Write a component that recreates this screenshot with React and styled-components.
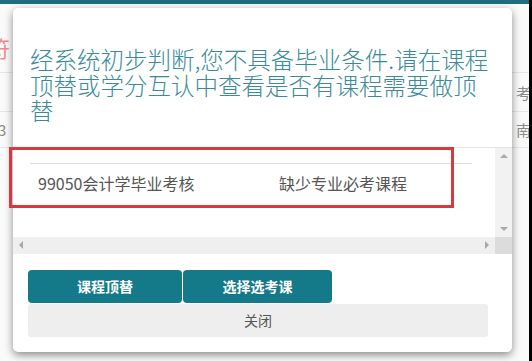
import styled, { createGlobalStyle } from "styled-components";

const GlobalStyle = createGlobalStyle`
  html, body {
    margin: 0;
    padding: 0;
    background: #fafafa;
  }
  body {
    font-family: "Noto Sans CJK SC", "Noto Sans", sans-serif;
  }
`;

const Page = styled.div`
  position: relative;
  width: 532px;
  height: 361px;
  overflow: hidden;
  background: #fafafa;
  border-right: 3px solid #000;
  box-sizing: border-box;
`;

const TopBar = styled.div`
  height: 4px;
  background: #1d6f7e;
`;

const BgRow = styled.div`
  display: flex;
  justify-content: space-between;
  align-items: center;
  height: ${({ $h }) => $h}px;
  padding-top: ${({ $pad }) => $pad || 0}px;
  border-bottom: 1px solid #e6e6e6;
  box-sizing: border-box;
  font-size: ${({ $size }) => $size || 15}px;
  color: ${({ $color }) => $color || "#8a8a8a"};
`;

const BgCell = styled.span`
  margin-left: ${({ $offset }) => $offset || 0}px;
  margin-right: ${({ $right }) => $right || 0}px;
`;

const Modal = styled.div`
  position: absolute;
  left: 13px;
  top: 8px;
  width: 499px;
  height: 344px;
  background: #fff;
  border-radius: 5px;
  box-shadow: 0 3px 9px rgba(0, 0, 0, 0.45);
  display: flex;
  flex-direction: column;
  overflow: hidden;
`;

const Header = styled.div`
  padding: 39px 18px 23px 17px;
  border-bottom: 1px solid #e5e5e5;
`;

const Title = styled.h4`
  margin: 0;
  font-size: 23.5px;
  line-height: 25.5px;
  font-weight: 300;
  color: #3a8b9a;
`;

const ScrollFrame = styled.div`
  height: 106px;
  display: grid;
  grid-template-columns: 1fr 17px;
  grid-template-rows: 1fr 17px;
`;

const Content = styled.div`
  overflow: hidden;
  padding: 15px 0 0 17px;
`;

const VTrack = styled.div`
  background: #f2f2f2;
  display: flex;
  flex-direction: column;
  justify-content: space-between;
  align-items: center;
  padding: 6px 0;
`;

const HTrack = styled.div`
  background: #efefef;
  display: flex;
  justify-content: space-between;
  align-items: center;
  padding: 0 6px;
`;

const Corner = styled.div`
  background: #dcdcdc;
`;

const Arrow = ({ dir }) => {
  const pts = {
    up: "0,4 4,0 8,4",
    down: "0,0 4,4 8,0",
    left: "4,0 0,4 4,8",
    right: "0,0 4,4 0,8",
  }[dir];
  const horiz = dir === "left" || dir === "right";
  return (
    <svg width={horiz ? 4 : 8} height={horiz ? 8 : 4} viewBox={horiz ? "0 0 4 8" : "0 0 8 4"}>
      <polygon points={pts} fill="#a8a8a8" />
    </svg>
  );
};

const Table = styled.table`
  width: 442px;
  border-collapse: collapse;
  font-size: 16px;
  color: #555;
`;

const Cell = styled.td`
  border-top: 1px solid #dddddd;
  padding: 7px 8px 8px;
  line-height: 24px;
  width: ${({ $w }) => ($w ? `${$w}px` : "auto")};
`;

const Footer = styled.div`
  padding: 16px 24px 15px 15px;
  display: flex;
  flex-direction: column;
`;

const ButtonRow = styled.div`
  display: flex;
  gap: 1px;
`;

const Primary = styled.button`
  width: ${({ $w }) => $w}px;
  height: 33px;
  border: none;
  border-radius: 4px;
  background: #147a8a;
  color: #fff;
  font-family: inherit;
  font-size: 14px;
  font-weight: bold;
  padding: 0;
`;

const Close = styled.button`
  height: 33px;
  margin-top: 1px;
  border: none;
  border-radius: 3px;
  background: #eeeeee;
  color: #555;
  font-family: inherit;
  font-size: 14px;
  padding: 0;
`;

const Mark = styled.div`
  position: absolute;
  left: 9px;
  top: 147px;
  width: 445px;
  height: 61px;
  border: 3px solid #d9383f;
  box-sizing: border-box;
  pointer-events: none;
`;

export default function App() {
  return (
    <>
      <GlobalStyle />
      <Page>
        <TopBar />
        <BgRow $h={69} $pad={18} $size={22} $color="#ea8d95">
          <BgCell $offset={-12}>符</BgCell>
        </BgRow>
        <BgRow $h={39}>
          <span />
          <BgCell $right={-2}>考</BgCell>
        </BgRow>
        <BgRow $h={36}>
          <BgCell $offset={-2}>3</BgCell>
          <BgCell $right={-2}>南</BgCell>
        </BgRow>

        <Modal>
          <Header>
            <Title>
              经系统初步判断,您不具备毕业条件.请在课程顶替或学分互认中查看是否有课程需要做顶替
            </Title>
          </Header>
          <ScrollFrame>
            <Content>
              <Table>
                <tbody>
                  <tr>
                    <Cell $w={225}>99050会计学毕业考核</Cell>
                    <Cell>缺少专业必考课程</Cell>
                  </tr>
                </tbody>
              </Table>
            </Content>
            <VTrack>
              <Arrow dir="up" />
              <Arrow dir="down" />
            </VTrack>
            <HTrack>
              <Arrow dir="left" />
              <Arrow dir="right" />
            </HTrack>
            <Corner />
          </ScrollFrame>
          <Footer>
            <ButtonRow>
              <Primary $w={154}>课程顶替</Primary>
              <Primary $w={149}>选择选考课</Primary>
            </ButtonRow>
            <Close>关闭</Close>
          </Footer>
        </Modal>
        <Mark />
      </Page>
    </>
  );
}
